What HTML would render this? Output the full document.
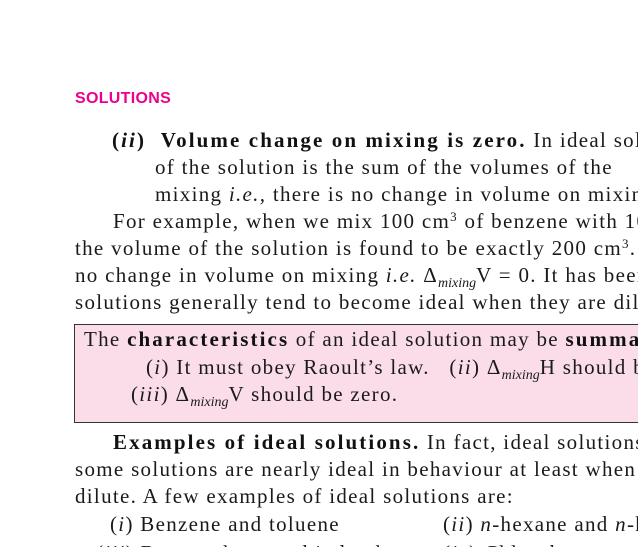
<!DOCTYPE html>
<html><head><meta charset="utf-8"><style>
html,body{margin:0;padding:0;width:638px;height:547px;overflow:hidden;background:#fff;}
#w{position:absolute;left:0;top:0;width:638px;height:547px;overflow:hidden;}
.l{position:absolute;white-space:nowrap;font-family:"Liberation Serif",serif;font-size:21px;letter-spacing:1.3px;line-height:27px;height:27px;color:#1a1a1a;}
.h{position:absolute;left:75px;top:90px;font-family:"Liberation Sans",sans-serif;font-weight:bold;font-size:16px;color:#ec008c;letter-spacing:0.3px;}
.box{position:absolute;left:74px;top:324px;width:600px;height:97px;background:#fbdde9;border:1px solid #333;}
sub{font-size:14px;font-style:italic;vertical-align:-5px;line-height:0;letter-spacing:0;}
sup{font-size:13px;vertical-align:7px;line-height:0;}
b{color:#111;letter-spacing:2.1px;}
</style></head><body><div id="w">
<div class="h">SOLUTIONS</div>
<div class="l" style="left:112px;top:127px"><b>(<i>ii</i>) &nbsp;Volume change on mixing is zero.</b> In ideal solutions</div>
<div class="l" style="left:155px;top:154px">of the solution is the sum of the volumes of the</div>
<div class="l" style="left:155px;top:181px">mixing <i>i.e.,</i> there is no change in volume on mixing.</div>
<div class="l" style="left:113px;top:208px">For example, when we mix 100 cm<sup>3</sup> of benzene with 100</div>
<div class="l" style="left:75px;top:235px">the volume of the solution is found to be exactly 200 cm<sup>3</sup>. Thus</div>
<div class="l" style="left:75px;top:262px">no change in volume on mixing <i>i.e.</i> Δ<sub>mixing</sub>V = 0. It has been</div>
<div class="l" style="left:75px;top:289px">solutions generally tend to become ideal when they are dilute.</div>
<div class="box"></div>
<div class="l" style="left:84px;top:326px">The <b>characteristics</b> of an ideal solution may be <b>summarised</b></div>
<div class="l" style="left:146px;top:354px">(<i>i</i>) It must obey Raoult’s law. &nbsp;&nbsp;(<i>ii</i>) Δ<sub>mixing</sub>H should be</div>
<div class="l" style="left:131px;top:381px">(<i>iii</i>) Δ<sub>mixing</sub>V should be zero.</div>
<div class="l" style="left:113px;top:429px"><b>Examples of ideal solutions.</b> In fact, ideal solutions are</div>
<div class="l" style="left:75px;top:456px">some solutions are nearly ideal in behaviour at least when</div>
<div class="l" style="left:75px;top:483px">dilute. A few examples of ideal solutions are:</div>
<div class="l" style="left:110px;top:511px">(<i>i</i>) Benzene and toluene</div>
<div class="l" style="left:443px;top:511px">(<i>ii</i>) <i>n</i>-hexane and <i>n</i>-heptane</div>
<div class="l" style="left:96px;top:540px">(<i>iii</i>) Bromoethane and iodoethane</div>
<div class="l" style="left:443px;top:540px">(<i>iv</i>) Chlorobenzene</div>
</div></body></html>
